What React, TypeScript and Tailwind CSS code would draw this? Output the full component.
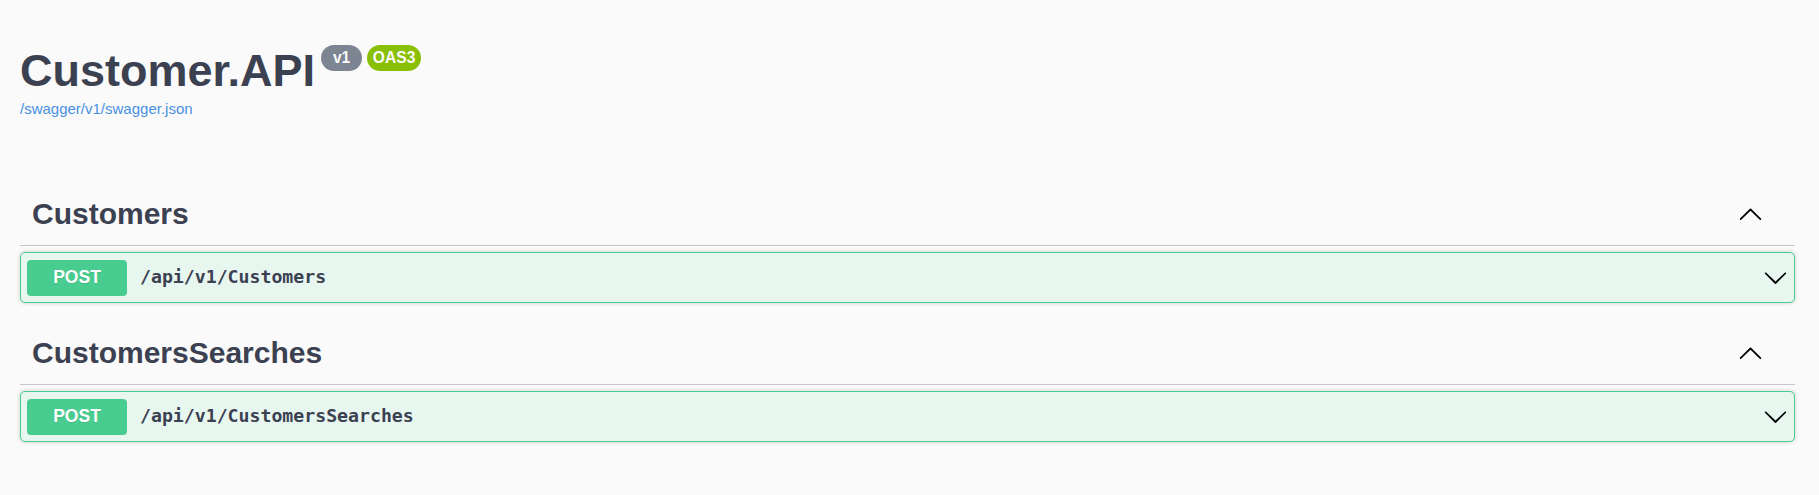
import React from "react";

const ArrowUp = () => (
  <svg width="25" height="25" viewBox="0 0 20 20" className="shrink-0" aria-hidden="true">
    <path
      fill="#000"
      d="M17.418 14.908c.272.268.709.268.979 0s.271-.701 0-.969l-7.908-7.83c-.27-.268-.707-.268-.979 0l-7.908 7.83c-.27.268-.27.701 0 .969.271.268.709.268.979 0L10 7.767l7.418 7.141z"
    />
  </svg>
);

const ArrowDown = () => (
  <svg width="25" height="25" viewBox="0 0 20 20" className="shrink-0 ml-auto" aria-hidden="true">
    <path
      fill="#000"
      d="M17.418 6.109c.272-.268.709-.268.979 0s.271.701 0 .969l-7.908 7.83c-.27.268-.707.268-.979 0l-7.908-7.83c-.27-.268-.27-.701 0-.969.271-.268.709-.268.979 0L10 13.25l7.418-7.141z"
    />
  </svg>
);

const Section = ({ tag, path }: { tag: string; path: string }) => (
  <div className="flex flex-col mb-[18px]">
    <h3 className="h-[64px] flex items-center justify-between pl-[12px] pr-[32px] border-b border-[#c4c6cb] mb-[6px]">
      <span className="text-[30px] leading-none font-bold text-[#3b4151]">{tag}</span>
      <ArrowUp />
    </h3>
    <div className="h-[51px] flex items-center px-[6px] border border-[#49cc90] rounded-[5px] bg-[#e8f6f0] shadow-[0_0_4px_rgba(0,0,0,0.19)]">
      <div className="w-[100px] h-[36px] rounded-[4px] bg-[#49cc90] flex items-center justify-center text-white font-bold text-[17.5px] leading-none [text-shadow:0_1px_0_rgba(0,0,0,0.1)]">
        POST
      </div>
      <span
        className="ml-[13px] text-[18.2px] font-bold text-[#3b4151] leading-none"
        style={{ fontFamily: '"DejaVu Sans Mono", "Liberation Mono", monospace' }}
      >
        {path}
      </span>
      <ArrowDown />
    </div>
  </div>
);

export default function App() {
  return (
    <div
      className="w-full min-h-[495px] bg-[#fafafa]"
      style={{ fontFamily: '"Liberation Sans", Arial, sans-serif' }}
    >
      <div className="pl-[20px] pr-[24px]">
        <div className="pt-[45px]">
          <div className="flex items-start">
            <h2 className="text-[45px] leading-[52px] font-bold text-[#3b4151] m-0">Customer.API</h2>
            <div className="flex items-center gap-[5px] ml-[6px] mt-[0px]">
              <span className="w-[41px] h-[26px] rounded-full bg-[#7d8492] text-[#fafafa] text-[15.6px] font-bold flex items-center justify-center leading-none">
                v1
              </span>
              <span className="w-[54px] h-[26px] rounded-full bg-[#89bf04] text-[#fafafa] text-[15.6px] font-bold flex items-center justify-center leading-none">
                OAS3
              </span>
            </div>
          </div>
          <a className="block mt-[3px] text-[15px] leading-[18px] text-[#4990e2] w-fit">
            /swagger/v1/swagger.json
          </a>
        </div>
        <div className="mt-[64px]">
          <Section tag="Customers" path="/api/v1/Customers" />
          <Section tag="CustomersSearches" path="/api/v1/CustomersSearches" />
        </div>
      </div>
    </div>
  );
}
